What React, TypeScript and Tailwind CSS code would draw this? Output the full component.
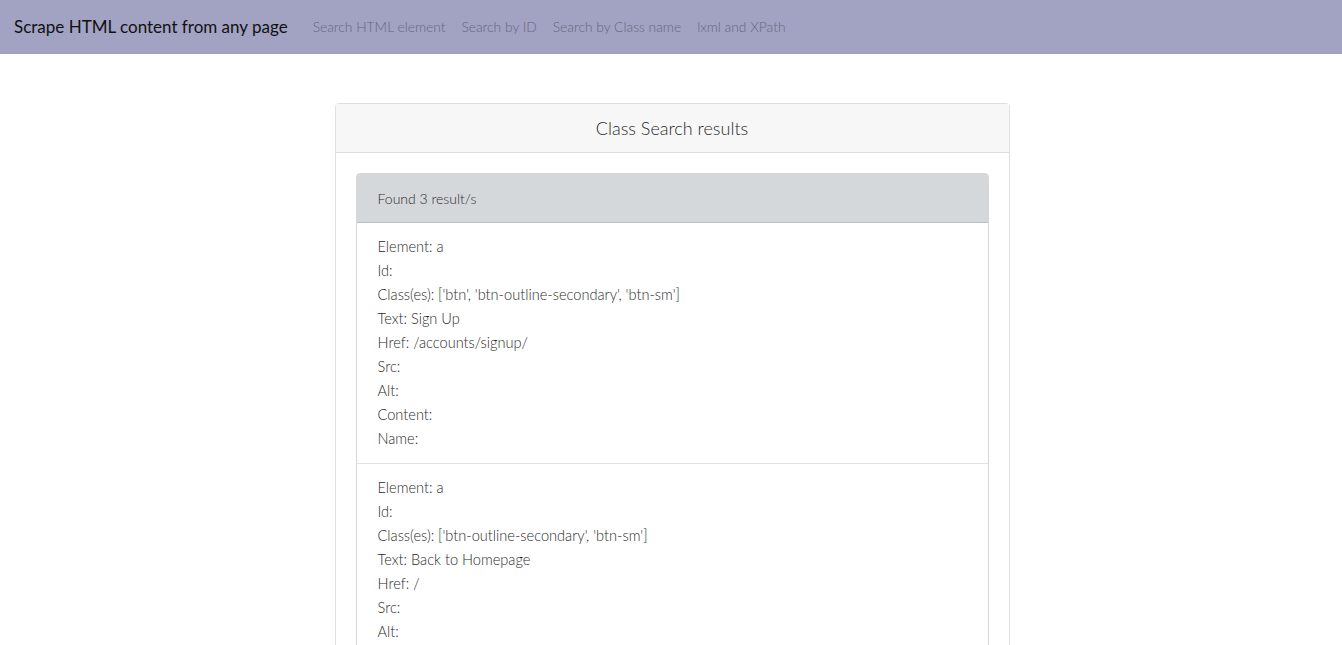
const results = [
  {
    element: "a",
    id: "",
    classes: "['btn', 'btn-outline-secondary', 'btn-sm']",
    text: "Sign Up",
    href: "/accounts/signup/",
  },
  {
    element: "a",
    id: "",
    classes: "['btn-outline-secondary', 'btn-sm']",
    text: "Back to Homepage",
    href: "/",
  },
  {
    element: "a",
    id: "",
    classes: "['btn', 'btn-sm']",
    text: "Log In",
    href: "/accounts/login/",
  },
];

const navLinks = ["Search HTML element", "Search by ID", "Search by Class name", "lxml and XPath"];

export default function App() {
  return (
    <div className="min-h-screen bg-white font-['Lato','Liberation_Sans',sans-serif] font-light text-[#2a2a2a]">
      <nav className="flex h-[54px] items-center bg-[#a2a2c3] px-[14px]">
        <span className="mr-[25px] text-[17px] font-normal text-[#111]">
          Scrape HTML content from any page
        </span>
        <div className="flex gap-[16px] text-[13.8px] text-[#67677e]">
          {navLinks.map((link) => (
            <a key={link} href="#">
              {link}
            </a>
          ))}
        </div>
      </nav>

      <main className="flex justify-center pl-[2px] pt-[49px]">
        <section className="w-[675px] rounded border border-[#dfdfdf]">
          <header className="flex h-[49px] items-center justify-center border-b border-[#dfdfdf] bg-[#f7f7f7] text-[18px]">
            Class Search results
          </header>
          <div className="p-[20px]">
            <div className="rounded border border-[#d6d6d6]">
              <div className="flex h-[49px] items-center border-b border-[#bbbfc3] bg-[#d5d8db] px-[21px] text-[14px]">
                Found 3 result/s
              </div>
              {results.map((r, i) => (
                <ResultItem key={i} {...r} />
              ))}
            </div>
          </div>
        </section>
      </main>
    </div>
  );
}

function ResultItem({
  element,
  id,
  classes,
  text,
  href,
}: {
  element: string;
  id: string;
  classes: string;
  text: string;
  href: string;
}) {
  const rows = [
    `Element: ${element}`,
    `Id: ${id}`,
    `Class(es): ${classes}`,
    `Text: ${text}`,
    `Href: ${href}`,
    "Src:",
    "Alt:",
    "Content:",
    "Name:",
  ];
  return (
    <div className="border-b border-[#e2e2e2] px-[21px] py-[12px] text-[14.6px] leading-[24px] last:border-b-0">
      {rows.map((row) => (
        <p key={row}>{row}</p>
      ))}
    </div>
  );
}
